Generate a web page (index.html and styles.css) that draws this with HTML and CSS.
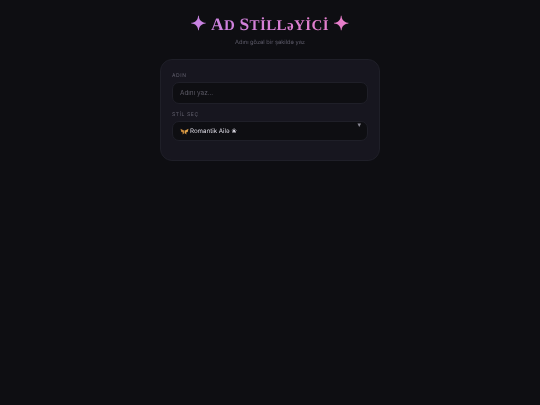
FILE: index.html
```html
<!DOCTYPE html>
<html lang="az">
<head>
  <meta charset="UTF-8" />
  <meta name="viewport" content="width=device-width, initial-scale=1.0"/>
  <title>Ad Stilləyici</title>
  <link rel="stylesheet" href="styles.css">
</head>
<body>
  <div class="page">
    <h1 class="title"><span class="star">✦</span> <span class="cap">A</span>D <span class="cap">S</span>TİLLəYİCİ <span class="star">✦</span></h1>
    <p class="subtitle">Adını gözəl bir şəkildə yaz</p>

    <div class="card">
      <label class="field-label" for="name-input">ADIN</label>
      <input class="field-box name-input" type="text" id="name-input" placeholder="Adını yaz..." />

      <label class="field-label" for="style-select">STİL SEÇ</label>
      <div class="field-box select-box" id="style-select">
        <svg class="butterfly" viewBox="0 0 10 8" width="9" height="7">
          <path d="M5 3.2 L0.4 0.8 L1.4 4.6 L3.2 5 L2.6 7.4 L5 5.6 Z" fill="#c98a3c"/>
          <path d="M5 3.2 L9.6 0.8 L8.6 4.6 L6.8 5 L7.4 7.4 L5 5.6 Z" fill="#e0a24a"/>
          <path d="M4.7 2.6 H5.3 V6 H4.7 Z" fill="#3a2a18"/>
        </svg>
        <span class="select-text">Romantik Ailə ❀</span>
        <span class="select-arrow">▾</span>
      </div>
    </div>
  </div>
</body>
</html>
```

FILE: styles.css
```css
body {
  margin: 0;
  background-color: #0e0e12;
  color: #f0eef5;
  font-family: 'Inter', 'Liberation Sans', sans-serif;
  text-rendering: geometricPrecision;
}
.page {
  padding: 12px 160px 0;
  will-change: transform;
}
.title {
  margin: 0;
  height: 24px;
  font-family: 'Liberation Serif', serif;
  font-size: 15px;
  line-height: 24px;
  font-weight: 700;
  letter-spacing: 0.4px;
  text-align: center;
  white-space: nowrap;
  background: linear-gradient(90deg, #c084e8, #f07cc4);
  -webkit-background-clip: text;
  background-clip: text;
  color: transparent;
}
.cap {
  font-size: 17.5px;
}
.star {
  font-size: 19px;
  line-height: 1;
}
.subtitle {
  margin: 3px 0 0;
  font-size: 5.7px;
  line-height: 8px;
  text-align: center;
  color: #5f5d6b;
}
.card {
  margin-top: 12px;
  padding: 13px 11px 20px;
  height: 102px;
  box-sizing: border-box;
  background-color: #17161f;
  border: 1px solid #1f1f28;
  border-radius: 12px;
}
.field-label {
  display: block;
  font-size: 5px;
  line-height: 6px;
  letter-spacing: 0.6px;
  color: #62606e;
  margin-bottom: 3px;
}
.field-box {
  display: flex;
  align-items: center;
  width: 100%;
  box-sizing: border-box;
  background-color: #0e0e12;
  border: 1px solid #1f1f28;
  border-radius: 7px;
  color: #dedce6;
  font-family: inherit;
  font-size: 6.2px;
}
.name-input {
  height: 22px;
  padding: 0 7px;
  margin-bottom: 8px;
  font-size: 6.4px;
  outline: none;
}
.name-input::placeholder {
  color: #5c5a66;
}
.select-box {
  position: relative;
  height: 20px;
  padding: 0 7px;
  gap: 1px;
}
.butterfly {
  flex: none;
}
.select-arrow {
  position: absolute;
  top: -2px;
  right: 6px;
  font-size: 7px;
  line-height: 9px;
  color: #8a8894;
}
```
